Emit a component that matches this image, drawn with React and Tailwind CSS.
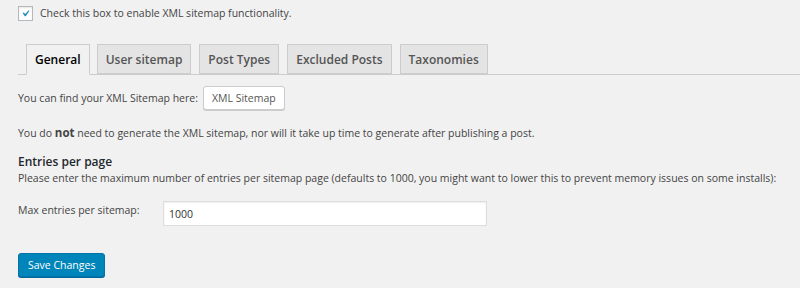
export default function App() {
  const tabs = ["General", "User sitemap", "Post Types", "Excluded Posts", "Taxonomies"];
  return (
    <div className="w-[800px] h-[288px] overflow-hidden bg-[#f1f1f1] text-[#444] text-[10.5px] leading-[16px] font-['Open_Sans',sans-serif]">
      <div className="flex items-center gap-[7px] pl-[18px] h-[26px]">
        <span className="w-[15px] h-[15px] bg-white border border-[#b4b9be] shadow-[inset_0_1px_2px_rgba(0,0,0,0.1)] flex items-center justify-center">
          <svg width="17" height="17" viewBox="0 0 20 20">
            <path d="M14.83 4.89l1.34.94-5.81 8.38H9.02L5.78 9.67l1.34-1.25 2.57 2.4z" fill="#1e8cbe" />
          </svg>
        </span>
        <span>Check this box to enable XML sitemap functionality.</span>
      </div>

      <div className="mt-[18px] ml-[18px] border-b border-[#ccc] flex h-[31px] pl-[8px]">
        {tabs.map((t, i) => (
          <div
            key={t}
            className={
              i === 0
                ? "mr-[7px] px-[8px] pt-[1px] h-[31px] border border-[#ccc] border-b-[#f1f1f1] bg-[#f1f1f1] text-black font-semibold text-[12px] flex items-center"
                : "mr-[8px] px-[8px] pt-[1px] h-[30px] border border-[#ccc] bg-[#e4e4e4] text-[#555] font-semibold text-[12px] flex items-center"
            }
          >
            {t}
          </div>
        ))}
      </div>

      <div className="pl-[18px] flex items-center mt-[11px] gap-[5px]">
        <span>You can find your XML Sitemap here:</span>
        <span className="h-[24px] px-[8px] bg-white border border-[#ccc] rounded-[3px] shadow-[0_1px_0_#ccc] flex items-center text-[#555]">
          XML Sitemap
        </span>
      </div>

      <p className="pl-[18px] mt-[15px]">
        You do <b className="font-bold text-[11.5px]">not</b> need to generate the XML sitemap, nor will it take up time to generate after publishing a post.
      </p>

      <h3 className="pl-[18px] mt-[13px] text-[12px] font-semibold text-[#23282d]">Entries per page</h3>
      <p className="pl-[18px]">
        Please enter the maximum number of entries per sitemap page (defaults to 1000, you might want to lower this to prevent memory issues on some installs):
      </p>

      <div className="pl-[18px] mt-[15px] flex items-start">
        <span className="w-[145px] pt-[1px]">Max entries per sitemap:</span>
        <div className="w-[324px] h-[25px] bg-white border border-[#ddd] shadow-[inset_0_1px_2px_rgba(0,0,0,0.07)] flex items-center pl-[5px] text-[#333]">
          1000
        </div>
      </div>

      <div className="pl-[18px] mt-[27px]">
        <span className="inline-flex items-center h-[24px] px-[9px] bg-[#0085ba] border border-[#0073aa] rounded-[3px] text-white shadow-[0_1px_0_#006799]">
          Save Changes
        </span>
      </div>
    </div>
  );
}
